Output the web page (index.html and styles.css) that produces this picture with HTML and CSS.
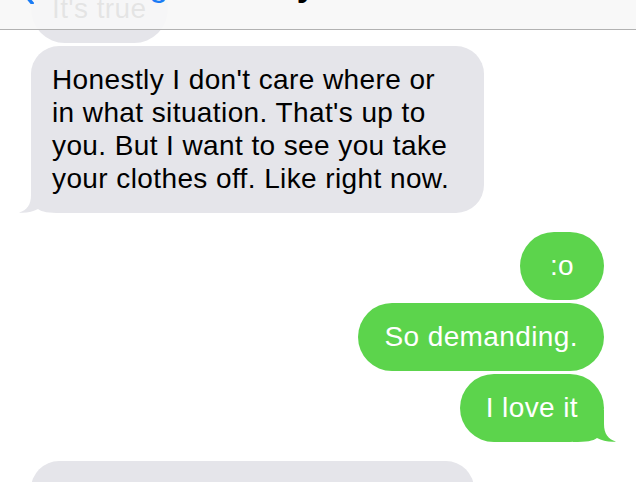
FILE: index.html
```html
<!DOCTYPE html>
<html lang="en">
<head>
<meta charset="utf-8">
<title>Messages</title>
<link rel="stylesheet" href="styles.css">
</head>
<body>
<header class="nav">
  <div class="back">
    <svg class="chevron" width="14" height="26" viewBox="0 0 14 26"><path d="M12 1 L2 13 L12 25" /></svg>
    <span class="back-label">Messages</span>
  </div>
  <div class="title">Tyler</div>
  <div class="nav-right"></div>
</header>
<main class="thread">
  <section class="group in">
    <div class="bubble">It's true</div>
    <div class="bubble multi">Honestly I don't care where or in what situation. That's up to you. But I want to see you take your clothes off. Like right now.<svg class="tail" width="44" height="32" viewBox="0 0 44 32"><path d="M13 0 L13 14 C13 24 9 29 1 31.6 C8 32.4 15 30.5 20 28 C24 31 30 32 44 32 L44 0 Z"/></svg></div>
  </section>
  <section class="group out">
    <div class="bubble short">:o</div>
    <div class="bubble">So demanding.</div>
    <div class="bubble">I love it<svg class="tail" width="44" height="32" viewBox="0 0 44 32"><path d="M13 0 L13 14 C13 24 9 29 1 31.6 C8 32.4 15 30.5 20 28 C24 31 30 32 44 32 L44 0 Z"/></svg></div>
  </section>
  <section class="group in">
    <div class="bubble partial"></div>
  </section>
</main>
</body>
</html>
```
FILE: styles.css
```css
* { box-sizing: border-box; }
html, body {
  margin: 0;
  height: 100%;
  overflow: hidden;
  background: #fff;
}
body {
  font-family: "Liberation Sans", Arial, sans-serif;
  position: relative;
}

/* translucent navigation bar over the scrolled thread */
.nav {
  position: absolute;
  top: 0;
  left: 0;
  right: 0;
  height: 30px;
  background: rgba(247, 247, 247, 0.92);
  border-bottom: 1px solid #b2b2b2;
  overflow: hidden;
  z-index: 2;
  display: grid;
  grid-template-columns: 1fr auto 1fr;
  align-items: start;
}
.back {
  display: flex;
  align-items: flex-start;
  padding-left: 20px;
}
.chevron {
  margin-top: -22px;
  fill: none;
  stroke: #1a7cf5;
  stroke-width: 3.4;
  stroke-linecap: square;
  flex: none;
}
.back-label {
  margin-left: 15px;
  margin-top: -33px;
  font-size: 34px;
  line-height: 34px;
  color: #1a7cf5;
}
.title {
  margin-top: -33px;
  font-size: 34px;
  line-height: 34px;
  font-weight: bold;
  color: #000;
}

/* message thread */
.thread {
  margin-top: -25px;
  padding: 0 32px 0 31px;
  display: flex;
  flex-direction: column;
  gap: 19px;
}
.group {
  display: flex;
  flex-direction: column;
  gap: 3px;
}
.group.in { align-items: flex-start; }
.group.out { align-items: flex-end; }

.bubble {
  position: relative;
  isolation: isolate;
  font-size: 28px;
  line-height: 33px;
  letter-spacing: 0.4px;
  padding: 17px 21px 18px 21px;
  border-radius: 34px;
  max-width: 453px;
}
.in .bubble {
  background: #e5e5ea;
  color: #000;
}
.out .bubble {
  background: #5cd44c;
  color: #fff;
  padding: 17px 26px 18px 26px;
}
.bubble.multi {
  border-radius: 28px;
  padding-right: 24px;
}
.bubble.short {
  min-width: 84px;
  text-align: center;
}
.bubble.partial {
  width: 443px;
  height: 68px;
  border-radius: 28px;
}

.tail {
  position: absolute;
  bottom: 0;
  z-index: -1;
}
.in .tail {
  left: -13px;
  fill: #e5e5ea;
}
.out .tail {
  right: -13px;
  transform: scaleX(-1);
  fill: #5cd44c;
}
```
